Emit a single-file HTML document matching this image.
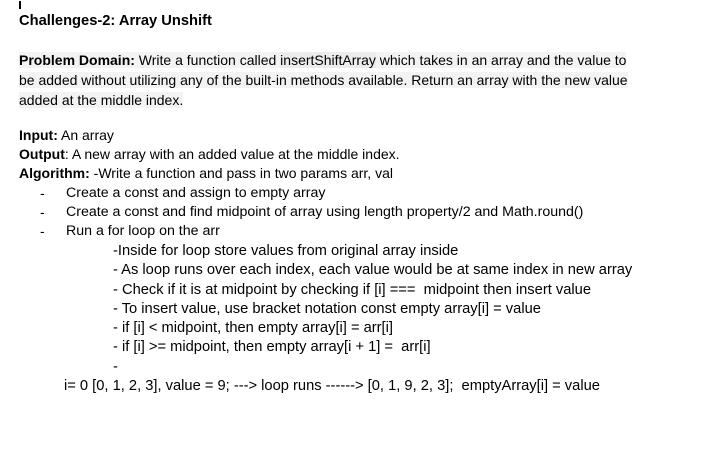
<!DOCTYPE html>
<html><head><style>
body{margin:0;width:704px;height:449px;background:#fff;font-family:"Liberation Sans",Arial,sans-serif;font-size:14px;color:#000;position:relative;overflow:hidden}
.l{position:absolute;white-space:pre;line-height:16px}
.b{font-size:14.2px}
.s{font-size:14.7px}
b{font-weight:bold}
.hl{background:#f3f3f3}
</style></head><body>
<div style="position:absolute;left:19px;top:1px;width:2px;height:8px;background:#000"></div>
<div class="l" style="left:19px;top:13px;font-size:14.7px"><b>Challenges-2: Array Unshift</b></div>
<div class="l" style="left:19px;top:52px"><span class="hl"><b>Problem Domain:</b> Write a function called <span style="background:#ececec">insertShiftArray</span> which takes in an array and the value to</span></div>
<div class="l" style="left:19px;top:72px"><span class="hl">be added without utilizing any of the built-in methods available. Return an array with the new value</span></div>
<div class="l" style="left:19px;top:92px"><span class="hl">added at the middle index.</span></div>
<div class="l" style="left:19px;top:127px"><b>Input:</b> An array</div>
<div class="l" style="left:19px;top:146px"><b>Output</b>: A new array with an added value at the middle index.</div>
<div class="l" style="left:19px;top:165px"><b>Algorithm:</b> -Write a function and pass in two params arr, val</div>
<div class="l" style="left:40px;top:185px">-</div><div class="l b" style="left:66px;top:185px">Create a const and assign to empty array</div>
<div class="l" style="left:40px;top:204px">-</div><div class="l b" style="left:66px;top:204px">Create a const and find midpoint of array using length property/2 and Math.round()</div>
<div class="l" style="left:40px;top:223px">-</div><div class="l b" style="left:66px;top:223px">Run a for loop on the arr</div>
<div class="l s" style="left:113px;top:243px">-Inside for loop store values from original array inside</div>
<div class="l s" style="left:113px;top:262px">- As loop runs over each index, each value would be at same index in new array</div>
<div class="l s" style="left:113px;top:282px">- Check if it is at midpoint by checking if [i] ===  midpoint then insert value</div>
<div class="l s" style="left:113px;top:301px">- To insert value, use bracket notation const empty array[i] = value</div>
<div class="l s" style="left:113px;top:320px">- if [i] &lt; midpoint, then empty array[i] = arr[i]</div>
<div class="l s" style="left:113px;top:339px">- if [i] &gt;= midpoint, then empty array[i + 1] =  arr[i]</div>
<div class="l s" style="left:113px;top:359px">-</div>
<div class="l s" style="left:64px;top:378px">i= 0 [0, 1, 2, 3], value = 9; ---&gt; loop runs ------&gt; [0, 1, 9, 2, 3];  emptyArray[i] = value</div>
</body></html>
